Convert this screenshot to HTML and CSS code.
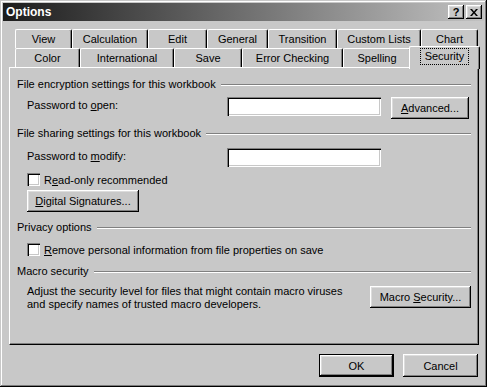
FILE: index.html
```html
<!DOCTYPE html>
<html lang="en">
<head>
  <meta charset="UTF-8" />
  <title>Options</title>
  <link rel="stylesheet" href="styles.css">
</head>
<body>
  <div class="window">
    <div class="titlebar">
      <span class="title">Options</span>
      <div class="title-buttons">
        <span class="tbtn tbtn-help">?</span>
        <span class="tbtn">
          <svg width="8" height="7" viewBox="0 0 8 7"><path d="M0 0h2l2 2.5L6 0h2L5 3.5 8 7H6L4 4.5 2 7H0l3-3.5z" fill="#000"/></svg>
        </span>
      </div>
    </div>

    <div class="tabs">
      <div class="tab-row">
        <div class="tab t-view">View</div>
        <div class="tab t-calc">Calculation</div>
        <div class="tab t-edit">Edit</div>
        <div class="tab t-general">General</div>
        <div class="tab t-trans">Transition</div>
        <div class="tab t-lists">Custom Lists</div>
        <div class="tab t-chart">Chart</div>
      </div>
      <div class="tab-row">
        <div class="tab t-color">Color</div>
        <div class="tab t-intl">International</div>
        <div class="tab t-save">Save</div>
        <div class="tab t-errors">Error Checking</div>
        <div class="tab t-spell">Spelling</div>
        <div class="tab t-security active"><span class="focus">Security</span></div>
      </div>
    </div>

    <div class="panel">
      <div class="group-head"><span>File encryption settings for this workbook</span></div>
      <div class="field-row r-open">
        <span class="field-label">Password to <u>o</u>pen:</span>
        <span class="textbox"></span>
        <button class="btn btn-adv"><u>A</u>dvanced...</button>
      </div>

      <div class="group-head g-share"><span>File sharing settings for this workbook</span></div>
      <div class="field-row r-modify">
        <span class="field-label">Password to <u>m</u>odify:</span>
        <span class="textbox"></span>
      </div>
      <div class="check-row c-readonly">
        <span class="checkbox"></span>
        <span>R<u>e</u>ad-only recommended</span>
      </div>
      <div class="field-row r-sign">
        <button class="btn btn-sign"><u>D</u>igital Signatures...</button>
      </div>

      <div class="group-head g-privacy"><span>Privacy options</span></div>
      <div class="check-row c-remove">
        <span class="checkbox"></span>
        <span><u>R</u>emove personal information from file properties on save</span>
      </div>

      <div class="group-head g-macro"><span>Macro security</span></div>
      <div class="macro-row">
        <p class="macro-text">Adjust the security level for files that might contain macro viruses<br>and specify names of trusted macro developers.</p>
        <button class="btn btn-macro">Macro <u>S</u>ecurity...</button>
      </div>
    </div>

    <div class="dialog-buttons">
      <button class="btn btn-default">OK</button>
      <button class="btn btn-cancel">Cancel</button>
    </div>
  </div>
</body>
</html>
```

FILE: styles.css
```css
* {
  box-sizing: border-box;
}

body {
  margin: 0;
  background: #c8c8c8;
  font-family: "Liberation Sans", Arial, sans-serif;
  font-size: 11px;
  color: #000;
}

u {
  text-decoration: underline;
  text-underline-offset: 1px;
}

.window {
  width: 487px;
  height: 387px;
  padding: 3px;
  background: #c8c8c8;
  box-shadow: inset -1px -1px #000, inset 1px 1px #c8c8c8,
              inset -2px -2px #7c7c7c, inset 2px 2px #fff;
}

/* title bar */
.titlebar {
  height: 18px;
  display: flex;
  align-items: center;
  justify-content: space-between;
  padding: 0 2px 0 3px;
  background: linear-gradient(to right, #1c1c1c, #c2c2c2);
  color: #fff;
}

.title {
  font-weight: bold;
  font-size: 12px;
}

.title-buttons {
  display: flex;
  gap: 2px;
}

.tbtn {
  width: 16px;
  height: 14px;
  display: flex;
  align-items: center;
  justify-content: center;
  background: #c8c8c8;
  color: #000;
  box-shadow: inset -1px -1px #000, inset 1px 1px #fff,
              inset -2px -2px #808080, inset 2px 2px #dcdcdc;
}

.tbtn-help {
  font-weight: bold;
  font-size: 11px;
  padding-bottom: 1px;
}

/* tabs */
.tabs {
  margin-top: 8px;
  padding-left: 9px;
}

.tab-row {
  display: flex;
  height: 19px;
}

.tab {
  height: 19px;
  padding-top: 3px;
  text-align: center;
  background: #c8c8c8;
  border-left: 1px solid #fff;
  border-top: 1px solid #fff;
  border-right: 1px solid #000;
  border-radius: 2px 2px 0 0;
  box-shadow: inset -1px 0 #808080;
}

.t-view { width: 57px; }
.t-calc { width: 76px; }
.t-edit { width: 59px; }
.t-general { width: 61px; }
.t-trans { width: 69px; }
.t-lists { width: 84px; }
.t-chart { width: 57px; }

.t-color { width: 65px; }
.t-intl { width: 94px; }
.t-save { width: 68px; }
.t-errors { width: 101px; }
.t-spell { width: 68px; }
.t-security { width: 67px; }

.tab-row .tab:first-child {
  margin-left: 3px;
}

.tab.active {
  position: relative;
  z-index: 1;
  width: 71px;
  height: 23px;
  margin: -2px -2px 0 -2px;
  padding-top: 2px;
}

.focus {
  display: inline-block;
  padding: 1px 4px 2px;
  outline: 1px dotted #000;
}

/* page */
.panel {
  margin-left: 6px;
  width: 470px;
  height: 278px;
  padding: 10px 7px 0 7px;
  border-top: 1px solid #fff;
  border-left: 1px solid #fff;
  border-right: 1px solid #000;
  border-bottom: 1px solid #000;
  box-shadow: inset -1px -1px #808080;
}

.group-head {
  display: flex;
  align-items: center;
  gap: 5px;
  height: 13px;
  line-height: 13px;
}

.group-head::after {
  content: "";
  flex: 1;
  border-top: 1px solid #808080;
  border-bottom: 1px solid #fff;
}

.g-share { margin-top: 8px; }
.g-privacy { margin-top: 9px; }
.g-macro { margin-top: 9px; }

.field-row {
  display: flex;
  align-items: flex-start;
  padding-left: 10px;
}

.r-open { margin-top: 6px; }
.r-modify { margin-top: 8px; }
.r-sign { margin-top: 4px; }

.field-label {
  width: 200px;
  line-height: 14px;
  padding-top: 1px;
}

.textbox {
  width: 154px;
  height: 19px;
  background: #fff;
  box-shadow: inset 1px 1px #808080, inset 2px 2px #000,
              inset -1px -1px #fff, inset -2px -2px #c8c8c8;
}

.check-row {
  display: flex;
  align-items: center;
  gap: 4px;
  height: 13px;
  padding-left: 10px;
}

.c-readonly { margin-top: 6px; }
.c-remove { margin-top: 9px; }

.checkbox {
  width: 13px;
  height: 13px;
  background: #fff;
  box-shadow: inset 1px 1px #808080, inset 2px 2px #000,
              inset -1px -1px #fff, inset -2px -2px #c8c8c8;
}

.macro-row {
  display: flex;
  align-items: flex-start;
  justify-content: space-between;
  margin-top: 7px;
  padding-left: 10px;
}

.macro-text {
  margin: 0;
  line-height: 13px;
}

/* buttons */
.btn {
  height: 22px;
  padding: 0;
  border: none;
  background: #c8c8c8;
  font: inherit;
  color: #000;
  box-shadow: inset -1px -1px #000, inset 1px 1px #fff,
              inset -2px -2px #808080, inset 2px 2px #dcdcdc;
}

.btn-adv {
  width: 78px;
  margin-left: 10px;
}

.btn-sign {
  width: 112px;
}

.btn-macro {
  width: 101px;
  margin-top: 1px;
}

.dialog-buttons {
  display: flex;
  justify-content: flex-end;
  gap: 9px;
  margin-top: 9px;
  padding-right: 6px;
}

.dialog-buttons .btn {
  width: 75px;
  height: 23px;
}

.btn-default {
  border: 1px solid #000;
  box-shadow: inset -1px -1px #000, inset 1px 1px #fff,
              inset -2px -2px #808080, inset 2px 2px #dcdcdc;
}
```
